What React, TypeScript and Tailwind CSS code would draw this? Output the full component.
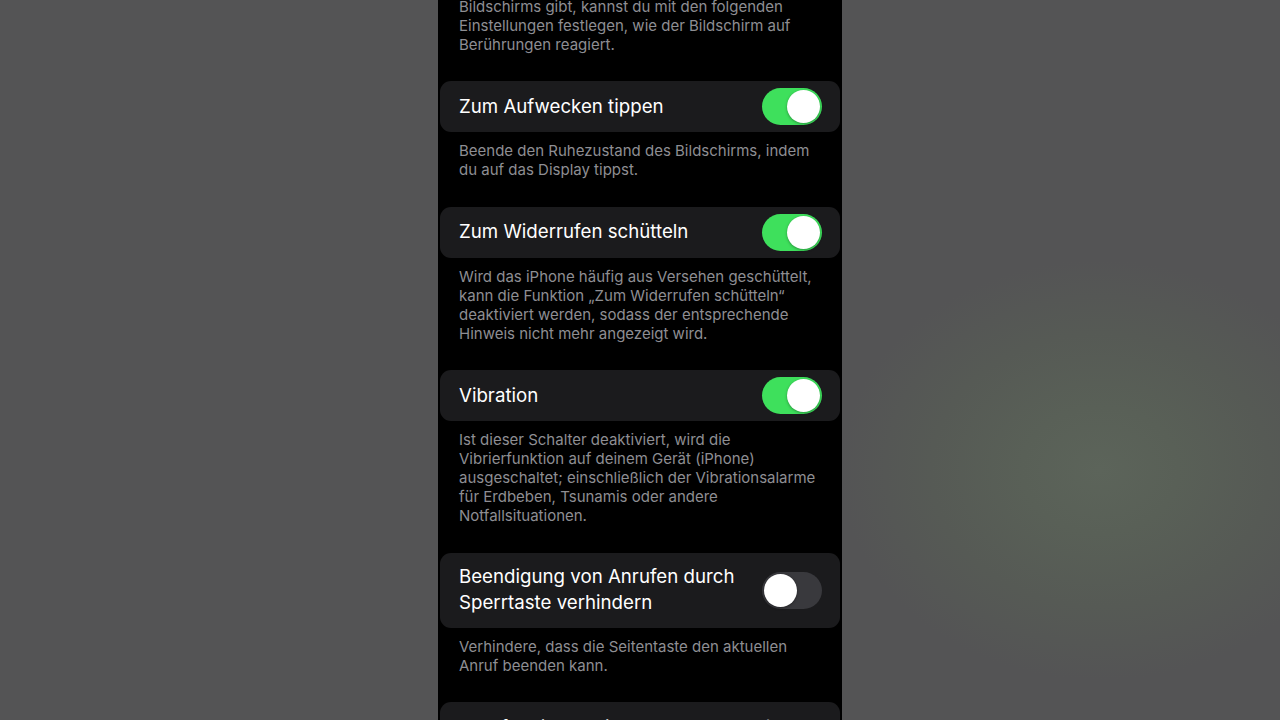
import { ChevronRight } from "lucide-react";

type Row = {
  title: string[];
  on?: boolean;
  note: string[];
};

const rows: Row[] = [
  {
    title: ["Zum Aufwecken tippen"],
    on: true,
    note: ["Beende den Ruhezustand des Bildschirms, indem", "du auf das Display tippst."],
  },
  {
    title: ["Zum Widerrufen schütteln"],
    on: true,
    note: [
      "Wird das iPhone häufig aus Versehen geschüttelt,",
      "kann die Funktion „Zum Widerrufen schütteln“",
      "deaktiviert werden, sodass der entsprechende",
      "Hinweis nicht mehr angezeigt wird.",
    ],
  },
  {
    title: ["Vibration"],
    on: true,
    note: [
      "Ist dieser Schalter deaktiviert, wird die",
      "Vibrierfunktion auf deinem Gerät (iPhone)",
      "ausgeschaltet; einschließlich der Vibrationsalarme",
      "für Erdbeben, Tsunamis oder andere",
      "Notfallsituationen.",
    ],
  },
  {
    title: ["Beendigung von Anrufen durch", "Sperrtaste verhindern"],
    on: false,
    note: ["Verhindere, dass die Seitentaste den aktuellen", "Anruf beenden kann."],
  },
];

function Note({ lines }: { lines: string[] }) {
  return (
    <div className="px-[19px] pt-[9px] pb-[27.5px] text-[15px] leading-[19px] text-[#8e8e93]">
      {lines.map((l) => (
        <div key={l} className="whitespace-nowrap">
          {l}
        </div>
      ))}
    </div>
  );
}

function Toggle({ on }: { on: boolean }) {
  return (
    <div
      className={`-my-[6px] flex h-[37px] w-[60px] shrink-0 items-center rounded-full px-[2px] ${
        on ? "justify-end bg-[#3ee05c]" : "justify-start bg-[#39393d]"
      }`}
    >
      <div className="h-[33px] w-[33px] rounded-full bg-white shadow-[0_1px_3px_rgba(0,0,0,0.35)]" />
    </div>
  );
}

function Card({ row }: { row: Row }) {
  return (
    <div className="flex min-h-[51px] items-center justify-between rounded-[11px] bg-[#1b1b1d] py-[11.5px] pl-[19px] pr-[18px]">
      <div className="text-[18.7px] leading-[26px] text-white">
        {row.title.map((t) => (
          <div key={t} className="whitespace-nowrap">
            {t}
          </div>
        ))}
      </div>
      <Toggle on={!!row.on} />
    </div>
  );
}

export default function App() {
  return (
    <div className="flex h-[720px] w-full justify-center overflow-hidden bg-[#545455] bg-[radial-gradient(ellipse_260px_210px_at_1100px_470px,#5c645a_0%,#596057_30%,#565a55_65%,#545455_100%)] font-['Inter','Liberation_Sans',sans-serif]">
      <div className="h-[720px] w-[404px] overflow-hidden bg-black px-[2px]">
        <div className="-mt-[12.5px]">
          <Note
            lines={[
              "Bildschirms gibt, kannst du mit den folgenden",
              "Einstellungen festlegen, wie der Bildschirm auf",
              "Berührungen reagiert.",
            ]}
          />
          {rows.map((r) => (
            <div key={r.title[0]}>
              <Card row={r} />
              <Note lines={r.note} />
            </div>
          ))}
          <div className="flex min-h-[51px] items-center justify-between rounded-[11px] bg-[#1b1b1d] py-[11.5px] pl-[19px] pr-[14px]">
            <span className="text-[18.7px] leading-[26px] text-white">Anrufaudio-Routing</span>
            <span className="flex items-center gap-1 text-[18.7px] leading-[26px] text-[#8e8e93]">
              Automatisch
              <ChevronRight size={20} strokeWidth={2.5} className="text-[#5a5a5f]" />
            </span>
          </div>
        </div>
      </div>
    </div>
  );
}
